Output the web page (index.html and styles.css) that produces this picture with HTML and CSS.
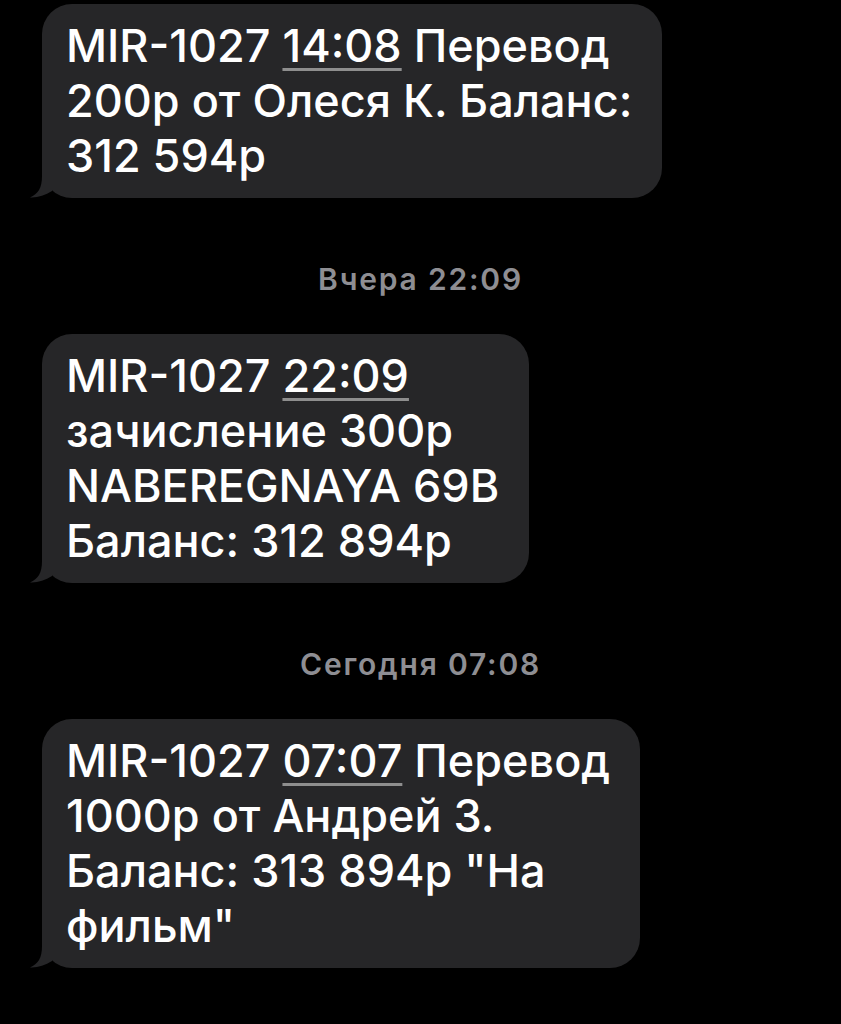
FILE: index.html
```html
<!DOCTYPE html>
<html lang="ru">
<head>
    <meta charset="UTF-8">
    <meta name="viewport" content="width=device-width, initial-scale=1.0">
    <title>Сообщения</title>
    <link rel="stylesheet" href="styles.css">
</head>
<body>

<div class="thread">
    <div class="bubble">
        MIR-1027 <span class="time-link">14:08</span> Перевод<br>
        200р от Олеся К. Баланс:<br>
        312 594р
        <svg class="tail" viewBox="0 0 40 40" width="40" height="40"><path d="M12 0 L12 18 C12 30 8 36 0 39.5 C7 40 15 37.5 22 33 L22 0 Z"/></svg>
    </div>

    <div class="stamp">Вчера 22:09</div>

    <div class="bubble">
        MIR-1027 <span class="time-link">22:09</span><br>
        зачисление 300р<br>
        NABEREGNAYA 69B<br>
        Баланс: 312 894р
        <svg class="tail" viewBox="0 0 40 40" width="40" height="40"><path d="M12 0 L12 18 C12 30 8 36 0 39.5 C7 40 15 37.5 22 33 L22 0 Z"/></svg>
    </div>

    <div class="stamp">Сегодня 07:08</div>

    <div class="bubble">
        MIR-1027 <span class="time-link">07:07</span> Перевод<br>
        1000р от Андрей З.<br>
        Баланс: 313 894р "На<br>
        фильм"
        <svg class="tail" viewBox="0 0 40 40" width="40" height="40"><path d="M12 0 L12 18 C12 30 8 36 0 39.5 C7 40 15 37.5 22 33 L22 0 Z"/></svg>
    </div>
</div>

</body>
</html>
```

FILE: styles.css
```css
body {
    background-color: #000;
    color: #fff;
    font-family: Inter, "Liberation Sans", Arial, sans-serif;
    margin: 0;
    height: 1024px;
    overflow: hidden;
}

.thread {
    display: flex;
    flex-direction: column;
    align-items: flex-start;
    padding: 4px 0 0 42px;
}

.bubble {
    position: relative;
    background-color: #262628;
    border-radius: 30px;
    padding: 14px 30px 15px 24px;
    font-size: 45px;
    font-weight: 500;
    line-height: 55px;
}

.time-link {
    text-decoration: underline;
    text-decoration-color: #8e8e8e;
    text-decoration-thickness: 3px;
    text-underline-offset: 6px;
}

/* хвостик пузыря снизу слева */
.tail {
    position: absolute;
    left: -12px;
    bottom: 0;
    fill: #262628;
}

.stamp {
    align-self: stretch;
    margin-left: -42px;
    text-align: center;
    color: #8e8e93;
    font-size: 30px;
    font-weight: 600;
    line-height: 30px;
    letter-spacing: 1.8px;
    margin-top: 66px;
    margin-bottom: 40px;
}
```
